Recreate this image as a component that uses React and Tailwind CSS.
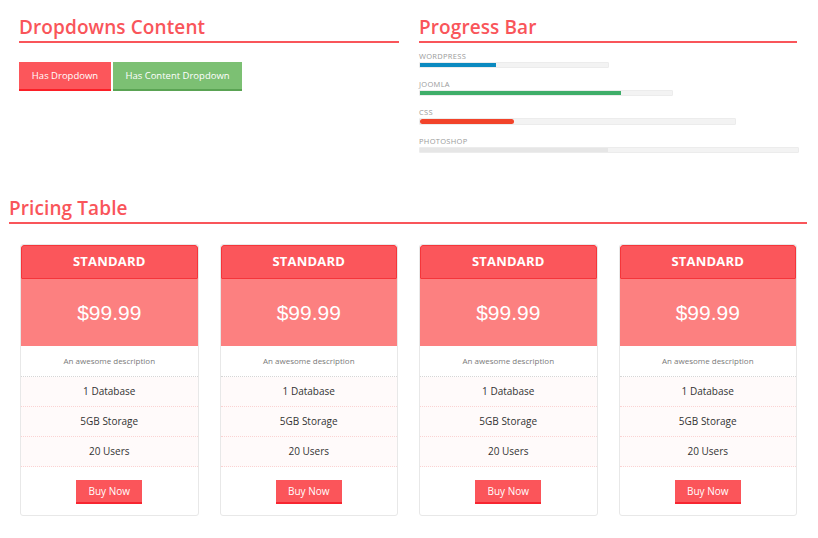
import React from 'react';

const SKILLS = [
    { name: 'WordPress', track: 'w-[188px]', fill: 'w-[76px]', color: 'bg-[#0b8ac0]', bar: 'h-[4px]' },
    { name: 'Joomla', track: 'w-[252px]', fill: 'w-[201px]', color: 'bg-[#3fae69]', bar: 'h-[4px]' },
    { name: 'CSS', track: 'w-[315px]', fill: 'w-[94px]', color: 'bg-[#f2432a] rounded-full', bar: 'h-[5px]' },
    { name: 'Photoshop', track: 'w-[378px]', fill: 'w-[188px]', color: 'bg-[#e6e6e6]', bar: 'h-[4px]' },
];

const FEATURES = ['1 Database', '5GB Storage', '20 Users'];

const SectionTitle = ({ children }) => (
    <h2 className="text-[19px] leading-[24px] text-[#f9555a] font-semibold pt-[2px] pb-[2px] border-b-2 border-[#f9555a] tracking-[0.1px]">
        {children}
    </h2>
);

const PricingCard = () => (
    <div className="bg-white border border-[#e8e8e8] rounded-[3px] overflow-hidden">
        <div className="h-[34px] bg-[#fb565b] border border-[#f5353a] rounded-t-[3px] flex items-center justify-center text-white font-bold text-[13px] tracking-[0.2px]">
            STANDARD
        </div>
        <div className="h-[67px] bg-[#fc8080] flex items-center justify-center text-white text-[21px] font-['Liberation_Sans',Arial,sans-serif]">
            $99.99
        </div>
        <div className="h-[31px] flex items-center justify-center text-[8px] text-[#7a7a7a] border-b border-dotted border-[#d6d6d6]">
            An awesome description
        </div>
        {FEATURES.map((f) => (
            <div key={f} className="h-[30px] bg-[#fffafa] flex items-center justify-center text-[10px] text-[#333] border-b border-dotted border-[#fbd3d3]">
                {f}
            </div>
        ))}
        <div className="h-[48px] flex items-start justify-center pt-[13px]">
            <button className="w-[66px] h-[24px] bg-[#fb555a] border-b-2 border-[#f72530] text-white text-[10px] leading-none">
                Buy Now
            </button>
        </div>
    </div>
);

export default function App() {
    return (
        <div className="w-[818px] h-[538px] bg-white font-['Open_Sans',sans-serif] overflow-hidden">
            {/* Top row */}
            <div className="grid grid-cols-[380px_378px] gap-[20px] pl-[19px] pt-[13px]">
                <div>
                    <SectionTitle>Dropdowns Content</SectionTitle>
                    <div className="flex gap-[2px] mt-[19px]">
                        <button className="w-[92px] h-[29px] pt-[1px] bg-[#fc565b] border-b-2 border-[#fb1f27] text-white text-[9.5px]">
                            Has Dropdown
                        </button>
                        <button className="w-[129px] h-[29px] pt-[1px] bg-[#7cc073] border-b-2 border-[#5aa353] text-white text-[9.5px]">
                            Has Content Dropdown
                        </button>
                    </div>
                </div>
                <div>
                    <SectionTitle>Progress Bar</SectionTitle>
                    <div className="flex flex-col gap-[11px] mt-[8px]">
                        {SKILLS.map((s) => (
                            <div key={s.name}>
                                <div className="text-[7.5px] leading-[10px] uppercase text-[#9a9a9a] tracking-[0.3px]">{s.name}</div>
                                <div className={`${s.track} ${s.bar} mt-[1px] bg-[#f3f3f3] border border-[#ececec] rounded-[1px] box-content`}>
                                    <div className={`${s.fill} h-full ${s.color}`} />
                                </div>
                            </div>
                        ))}
                    </div>
                </div>
            </div>

            {/* Pricing */}
            <div className="pl-[9px] pr-[11px] mt-[41px]">
                <SectionTitle>Pricing Table</SectionTitle>
                <div className="grid grid-cols-4 gap-[21px] px-[11px] pr-[10px] mt-[20px]">
                    <PricingCard />
                    <PricingCard />
                    <PricingCard />
                    <PricingCard />
                </div>
            </div>
        </div>
    );
}
